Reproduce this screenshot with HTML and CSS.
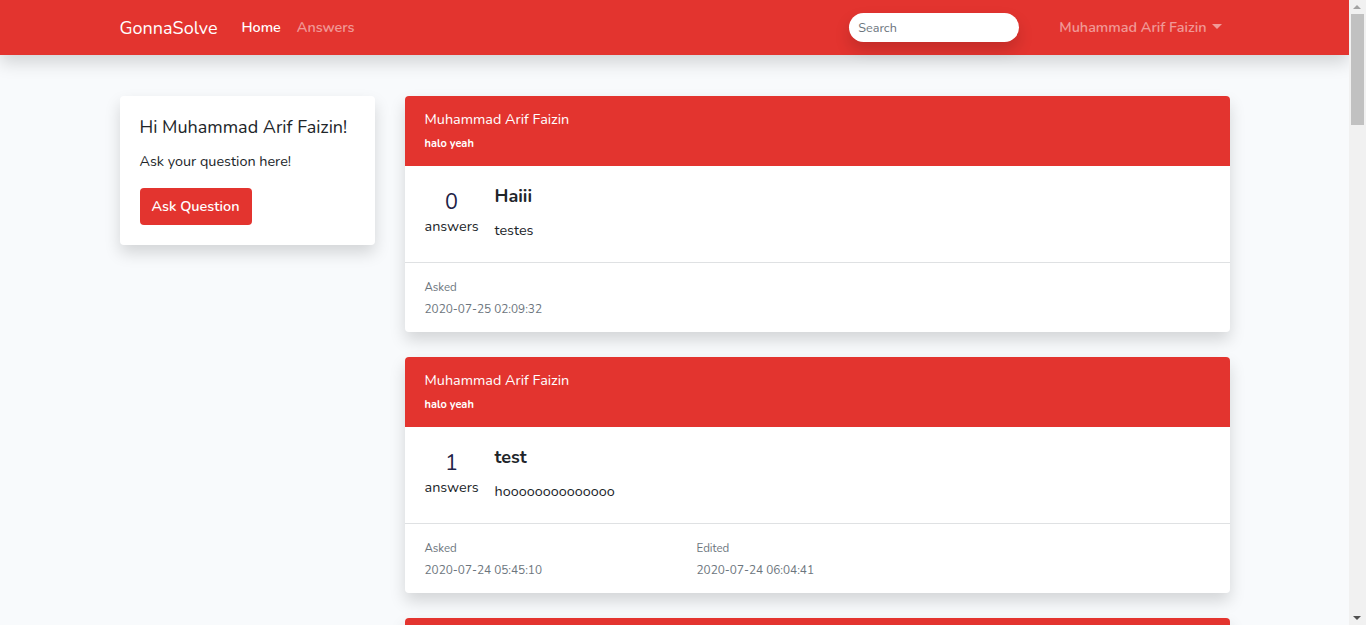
FILE: index.html
```html
<!DOCTYPE html>
<html lang="en">
<head>
<meta charset="utf-8">
<title>GonnaSolve</title>
<link rel="stylesheet" href="styles.css">
</head>
<body>
<div class="scrollbar" aria-hidden="true">
  <span class="sb-up"></span>
  <span class="sb-thumb"></span>
  <span class="sb-down"></span>
</div>
<nav class="navbar">
  <div class="container nav-inner">
    <a class="brand" href="#">GonnaSolve</a>
    <ul class="nav-left">
      <li><a class="nav-link active" href="#">Home</a></li>
      <li><a class="nav-link" href="#">Answers</a></li>
    </ul>
    <div class="nav-right">
      <input class="search" type="text" placeholder="Search">
      <a class="nav-link user" href="#">Muhammad Arif Faizin <span class="caret"></span></a>
    </div>
  </div>
</nav>
<main class="container main">
  <aside class="side">
    <div class="card side-card">
      <h5 class="hi">Hi Muhammad Arif Faizin!</h5>
      <p class="ask-text">Ask your question here!</p>
      <a class="btn" href="#">Ask Question</a>
    </div>
  </aside>
  <section class="feed">
    <div class="card q-card">
      <div class="q-head">
        <div class="q-user">Muhammad Arif Faizin</div>
        <div class="q-bio">halo yeah</div>
      </div>
      <div class="q-body">
        <div class="votes"><div class="count">0</div><div class="label">answers</div></div>
        <div class="q-main">
          <h4 class="q-title">Haiii</h4>
          <p class="q-text">testes</p>
        </div>
      </div>
      <div class="q-foot">
        <div class="meta"><div class="meta-label">Asked</div><div class="meta-val">2020-07-25 02:09:32</div></div>
      </div>
    </div>
    <div class="card q-card">
      <div class="q-head">
        <div class="q-user">Muhammad Arif Faizin</div>
        <div class="q-bio">halo yeah</div>
      </div>
      <div class="q-body">
        <div class="votes"><div class="count">1</div><div class="label">answers</div></div>
        <div class="q-main">
          <h4 class="q-title">test</h4>
          <p class="q-text">hoooooooooooooo</p>
        </div>
      </div>
      <div class="q-foot">
        <div class="meta"><div class="meta-label">Asked</div><div class="meta-val">2020-07-24 05:45:10</div></div>
        <div class="meta"><div class="meta-label">Edited</div><div class="meta-val">2020-07-24 06:04:41</div></div>
      </div>
    </div>
    <div class="card q-card">
      <div class="q-head">
        <div class="q-user">Muhammad Arif Faizin</div>
        <div class="q-bio">halo yeah</div>
      </div>
      <div class="q-body">
        <div class="votes"><div class="count">2</div><div class="label">answers</div></div>
        <div class="q-main">
          <h4 class="q-title">hello</h4>
          <p class="q-text">world</p>
        </div>
      </div>
      <div class="q-foot">
        <div class="meta"><div class="meta-label">Asked</div><div class="meta-val">2020-07-23 10:12:05</div></div>
      </div>
    </div>
  </section>
</main>
</body>
</html>
```
FILE: styles.css
```css
* { box-sizing: border-box; }
html, body { margin: 0; padding: 0; }
body {
  background: #f8fafc;
  font-family: "Nunito", "Lato", "Noto Sans", sans-serif;
  font-size: 14.4px;
  line-height: 1.6;
  color: #212529;
  margin-right: 17px;
}
a { text-decoration: none; }
.scrollbar {
  position: fixed;
  top: 0;
  right: 0;
  width: 17px;
  height: 100vh;
  background: #f1f1f1;
  z-index: 10;
}
.sb-thumb {
  position: absolute;
  left: 2px;
  top: 14px;
  width: 13px;
  height: 111px;
  background: #c1c1c1;
}
.sb-up, .sb-down {
  position: absolute;
  left: 4px;
  width: 0; height: 0;
  border-left: 4.5px solid transparent;
  border-right: 4.5px solid transparent;
}
.sb-up { top: 5px; border-bottom: 4px solid #a3a3a3; }
.sb-down { bottom: 5px; border-top: 4px solid #505050; }
.container {
  width: 1140px;
  margin: 0 auto;
  padding: 0 15px;
}
.navbar {
  background: #e3342f;
  height: 55px;
  box-shadow: 0 8px 16px rgba(0,0,0,0.15);
  position: relative;
  z-index: 2;
}
.nav-inner {
  display: flex;
  align-items: center;
  height: 55px;
}
.brand {
  color: #fff;
  font-size: 18px;
  margin-right: 16px;
  line-height: 1;
}
.nav-left {
  display: flex;
  list-style: none;
  margin: 0;
  padding: 0;
}
.nav-link {
  display: block;
  padding: 8px;
  color: rgba(255,255,255,0.5);
  font-weight: 600;
}
.nav-link.active { color: #fff; }
.nav-right {
  margin-left: auto;
  display: flex;
  align-items: center;
}
.search {
  width: 170px;
  height: 29px;
  border: 0;
  border-radius: 15px;
  padding: 4px 9px;
  font-family: inherit;
  font-size: 12.6px;
  background: #fff;
  box-shadow: 0 8px 16px rgba(0,0,0,0.15);
  outline: none;
  margin-right: 32px;
}
.search::placeholder { color: #6c757d; }
.user { display: flex; align-items: center; }
.caret {
  display: inline-block;
  margin-left: 5px;
  border-top: 5px solid rgba(255,255,255,0.5);
  border-left: 5px solid transparent;
  border-right: 5px solid transparent;
  width: 0; height: 0;
  position: relative;
  top: -1px;
}
.main {
  display: flex;
  padding-top: 41px;
  padding-bottom: 24px;
}
.side { width: 285px; padding-right: 30px; flex: none; }
.feed { flex: 1; display: flex; flex-direction: column; gap: 25px; }
.card {
  background: #fff;
  border-radius: 4px;
  box-shadow: 0 8px 16px rgba(0,0,0,0.15);
  overflow: hidden;
}
.side-card { padding: 20px; }
.hi {
  margin: 0 0 11px;
  font-size: 18px;
  font-weight: 400;
  line-height: 21.6px;
  padding-top: 1px;
  color: #212529;
}
.ask-text { margin: 0 0 15px; }
.btn {
  display: inline-block;
  background: #e3342f;
  color: #fff;
  font-weight: 600;
  padding: 7px 12px;
  border-radius: 4px;
  line-height: 23px;
  width: 112px;
  text-align: center;
}
.q-head {
  background: #e3342f;
  color: #fff;
  padding: 12px 20px;
  height: 70px;
}
.q-user { line-height: 23px; }
.q-bio { font-size: 11px; font-weight: 700; line-height: 18px; margin-top: 4px; }
.q-body {
  display: flex;
  padding: 20px;
  border-bottom: 1px solid #dfe1e3;
  height: 97px;
}
.votes { width: 54px; text-align: center; margin-right: 16px; flex: none; padding-top: 1px; }
.count { font-size: 21.6px; line-height: 30px; color: #1f2347; }
.label { line-height: 20px; margin-top: -1px; }
.q-title { margin: 0 0 11px; font-size: 18px; font-weight: 700; line-height: 21.6px; }
.q-text { margin: 0; }
.q-foot {
  display: flex;
  padding: 15px 20px 12px;
  height: 69px;
}
.meta { width: 272px; }
.meta-label { font-size: 11.5px; line-height: 18px; color: #6c757d; }
.meta-val { font-size: 11.8px; line-height: 19px; margin-top: 4px; color: #6c757d; }
```
